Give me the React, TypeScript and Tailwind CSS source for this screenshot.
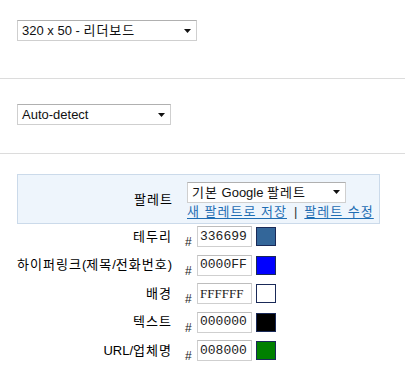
import React from "react";

// Paramètres d'annonce : taille, langue et palette de couleurs

const FONT = { fontFamily: '"Liberation Sans", Arial, "Noto Sans CJK KR", sans-serif' };

interface ColorRow {
  label: React.ReactNode;
  value: string;
  serif?: boolean;
}

// Hangul un peu plus large, comme dans Gulim
function K({ children }: { children: React.ReactNode }) {
  return <span className="tracking-[1px]">{children}</span>;
}

const colorRows: ColorRow[] = [
  { label: <K>테두리</K>, value: "336699" },
  {
    label: (
      <>
        <K>하이퍼링크</K>(<K>제목</K>/<K>전화번호</K>)
      </>
    ),
    value: "0000FF",
  },
  { label: <K>배경</K>, value: "FFFFFF", serif: true },
  { label: <K>텍스트</K>, value: "000000" },
  {
    label: (
      <>
        URL/<K>업체명</K>
      </>
    ),
    value: "008000",
  },
];

function Arrow() {
  return (
    <svg width="7" height="4" viewBox="0 0 7 4" className="shrink-0">
      <path d="M0 0 L7 0 L3.5 4 Z" fill="#111" />
    </svg>
  );
}

function FakeSelect({ children, width }: { children: React.ReactNode; width: string }) {
  return (
    <div
      className={`${width} h-[21px] flex items-center justify-between pl-[4px] pr-[5px] bg-white border border-[#cfcfcf] border-t-[#b0b0b0] text-[13px] text-[#111]`}
    >
      <span className="whitespace-nowrap leading-none">{children}</span>
      <Arrow />
    </div>
  );
}

export default function App() {
  return (
    <div className="w-[405px] h-[387px] bg-white text-black" style={FONT}>
      {/* Taille */}
      <div className="h-[78px] pt-[20px] px-[17px]">
        <FakeSelect width="w-[180px]">
          320 x 50 - <K>리더보드</K>
        </FakeSelect>
      </div>

      {/* Langue */}
      <div className="h-[75px] border-t border-[#dcdcdc] pt-[25px] px-[17px]">
        <FakeSelect width="w-[154px]">Auto-detect</FakeSelect>
      </div>

      {/* Palette */}
      <div className="border-t border-[#dcdcdc] pt-[20px] px-[17px]">
        <div className="w-[363px] h-[50px] bg-[#eef5fc] border border-[#cbdaea] flex items-center">
          <div className="w-[155px] text-right text-[13px] pt-[1px]">
            <K>팔레트</K>
          </div>
          <div className="ml-[14px] pt-[2px]">
            <FakeSelect width="w-[159px]">
              <K>기본</K> Google <K>팔레트</K>
            </FakeSelect>
            <div className="flex items-center text-[13px] leading-[15px] mt-[1px] whitespace-nowrap">
              <a className="text-[#1e6db3] underline underline-offset-[2px]">
                <K>새 팔레트로 저장</K>
              </a>
              <span className="mx-[7px] text-[#333]">|</span>
              <a className="text-[#1e6db3] underline underline-offset-[2px]">
                <K>팔레트 수정</K>
              </a>
            </div>
          </div>
        </div>

        <div className="mt-[2px] flex flex-col gap-[7.5px]">
          {colorRows.map(row => (
            <div key={row.value} className="h-[21px] flex items-center">
              <div className="w-[155px] text-right text-[13px] whitespace-nowrap">{row.label}</div>
              <span className="ml-[13px] w-[12px] text-[12px] self-end leading-none mb-[-1px] text-[#222]">#</span>
              <div
                className="w-[55px] h-[21px] bg-white border border-[#cfcfcf] border-t-[#bdbdbd] flex items-center pl-[2px] text-[13px] text-[#222]"
                style={{ fontFamily: row.serif ? '"Liberation Serif", serif' : '"Liberation Mono", monospace' }}
              >
                {row.value}
              </div>
              <div
                className="ml-[4px] w-[20px] h-[19px] border border-[#1a2a58]"
                style={{ backgroundColor: `#${row.value}` }}
              />
            </div>
          ))}
        </div>
      </div>
    </div>
  );
}
